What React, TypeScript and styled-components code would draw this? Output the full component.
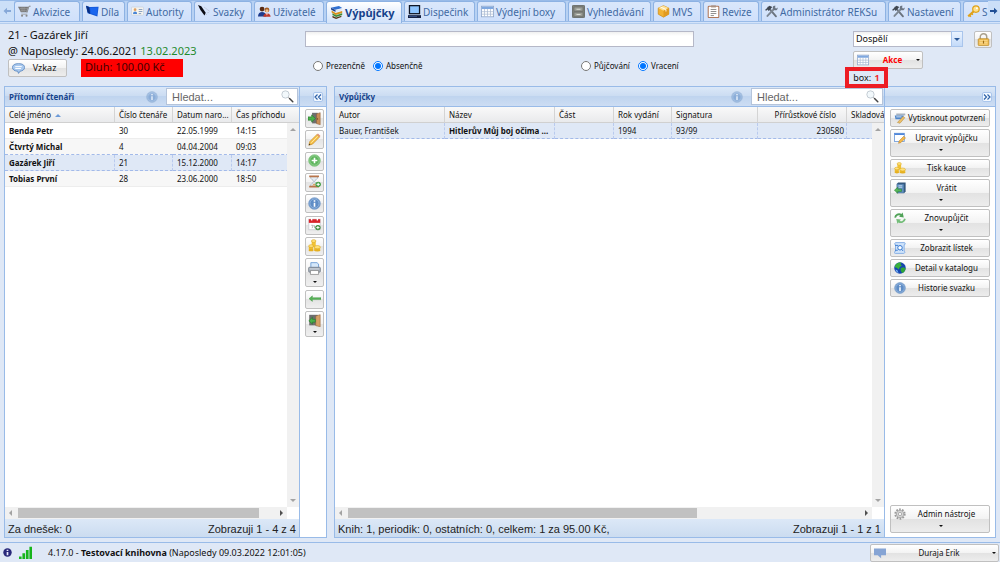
import React from "react";
import styled, { createGlobalStyle, css } from "styled-components";

const uiFont = `"Noto Sans", "Open Sans", sans-serif`;
const arial = `"Liberation Sans", Arial, sans-serif`;

const GlobalStyle = createGlobalStyle`
  *, *::before, *::after { box-sizing: border-box; }
  body { margin: 0; background: #dfe8f6; font-family: ${uiFont}; color: #111; }
  button, input, select { font-family: inherit; color: inherit; margin: 0; }
`;

/* ---------- icons ---------- */

const Svg = styled.svg<{ $size?: number }>`
  display: block;
  flex: none;
  width: ${(p) => p.$size ?? 12}px;
  height: ${(p) => p.$size ?? 12}px;
`;

const drawings: Record<string, React.ReactNode> = {
  cart: (
    <>
      <path d="M15.500 1.500h-2l-2.500 8" fill="none" stroke="#888" strokeWidth="1.200" />
      <path d="M0 2h12.500l-2 7H3.500z" fill="#777" />
      <path d="M2 4.300h9M3 6.600h8M5 2.500v6.500M7.500 2.500v6.500" stroke="#a5a5a5" strokeWidth=".6" />
      <path d="M4 11.300h7.500" stroke="#999" strokeWidth="1.100" />
      <circle cx="5" cy="13.300" r="1.300" fill="#888" />
      <circle cx="10.500" cy="13.300" r="1.300" fill="#888" />
    </>
  ),
  book: (
    <>
      <path d="M0 1l4.500 1.500 11-.5-1.500 12-9-3-3-1z" fill="#1257d6" />
      <path d="M0 1l4 1.500L5 11 2 9z" fill="#0a2f80" />
      <path d="M5 3.500l9.500-.5-1.300 9.500-7.200-2.300z" fill="#1a66ee" />
    </>
  ),
  card: (
    <>
      <rect x=".5" y="2.500" width="15" height="10" rx="1" fill="#f6f4ee" stroke="#c9d3e2" />
      <circle cx="5" cy="5.700" r="1.700" fill="#e0a060" />
      <path d="M2.500 11c0-4 5-4 5 0z" fill="#4a86d6" />
      <path d="M9.500 5.500h4.500M9.500 8h4.500M9.500 10.500h3" stroke="#8aa0c0" strokeWidth="1.200" />
    </>
  ),
  pen: (
    <>
      <path d="M0 0l4 1.500 5.500 8L8 13 3 6z" fill="#0c0c14" />
      <path d="M8 3l6 4.500-4 4.500" fill="none" stroke="#aab" strokeWidth="1" strokeDasharray="1.500 1.500" />
    </>
  ),
  users: (
    <>
      <circle cx="5" cy="5" r="3" fill="#5a2d16" />
      <path d="M0 14c0-7 10-7 10 0z" fill="#1e3b8c" />
      <circle cx="11" cy="6" r="3" fill="#a55c22" />
      <circle cx="11" cy="7" r="1.900" fill="#f0c090" />
      <path d="M6.500 14.500c0-6 9-6 9 0z" fill="#c0392b" />
      <path d="M10 10l1 3 1-3z" fill="#fff" />
    </>
  ),
  books: (
    <>
      <path d="M1 2l10-2 4 2.500-8 2z" fill="#2f6fd0" />
      <path d="M1 2l6 3v2.500L1.500 4.500z" fill="#1b3f8a" />
      <path d="M7 5l8-2v2.300L7 7.500z" fill="#dfe8f6" />
      <path d="M2 5.500l5 3 8-2.500v2.500l-8 2.500-5-3z" fill="#d99018" />
      <path d="M3 9l4.500 2.500L15 9v2l-7.500 2.500L3 11z" fill="#3d8b37" />
      <path d="M3 12l4.500 2L14 12v1.500L7.500 16 3 14z" fill="#5a3a18" />
    </>
  ),
  monitor: (
    <>
      <rect x="1" y="0" width="14" height="11.500" fill="#101828" />
      <rect x="2.600" y="1.600" width="10.800" height="8.300" fill="#8ec5ff" />
      <rect x="0" y="12.500" width="16" height="3.500" fill="#152040" />
      <path d="M1 14h10" stroke="#3d5fa0" />
    </>
  ),
  grid: (
    <>
      <rect x=".5" y="1.500" width="15" height="13" fill="#fff" stroke="#8fa5c8" />
      <path d="M1 2h14v3H1z" fill="#7fa8e0" />
      <path d="M4.300 5v9M8 5v9M11.700 5v9M1 8.200h14M1 11.300h14" stroke="#a9b9d2" strokeWidth=".9" />
    </>
  ),
  cabinet: (
    <>
      <rect x=".5" y=".5" width="15" height="15" rx="1" fill="#7d8078" stroke="#5d605a" />
      <path d="M2.500 2.500h11v5h-11zM2.500 9h11v5h-11z" fill="#9a9d95" stroke="#666" strokeWidth=".7" />
      <path d="M5.500 4.500h5v1.300h-5zM5.500 11h5v1.300h-5z" fill="#d8dad4" />
    </>
  ),
  box: (
    <>
      <path d="M8 .8l6.500 3v7.500L8 15l-6.500-3.700V3.800z" fill="#f2b233" stroke="#c98512" strokeWidth=".8" />
      <path d="M8 .8l6.500 3L8 7 1.500 3.800z" fill="#ffe193" />
      <path d="M8 7l6.500-3.200v7.500L8 15z" fill="#e19a20" />
      <path d="M4.500 2.500l6.500 3v2.500" fill="none" stroke="#fff" strokeWidth="1.100" />
    </>
  ),
  list: (
    <>
      <rect x="1.500" y="1.500" width="13" height="14" rx="1" fill="#fff" stroke="#b0785a" strokeWidth="1.300" />
      <path d="M5 .5h6v2.500H5z" fill="#a89080" />
      <path d="M4.500 5.500h7M4.500 8h7M4.500 10.500h7M4.500 13h4" stroke="#666" strokeWidth=".9" />
    </>
  ),
  tools: (
    <>
      <path d="M4 3l9.500 11" stroke="#6b737e" strokeWidth="2.300" strokeLinecap="round" />
      <path d="M0 6l5.500-5L9 2.500 4.500 7.500 3 5.500 1.500 7z" fill="#3f4650" />
      <path d="M12 4L3 13.500" stroke="#7d8794" strokeWidth="2.300" strokeLinecap="round" />
      <path d="M10 1.500c2-1 3-.5 3-.5l-1 2.500 1.500 1L15.500 3c.5 2-1 4-3.500 3.500S9 3.500 10 1.500z" fill="#6a7482" />
    </>
  ),
  key: (
    <>
      <path d="M9 7l-7.500 7" stroke="#dfa21c" strokeWidth="2.600" />
      <path d="M3 12.500l1.800 2M5.500 10.200l1.800 2" stroke="#dfa21c" strokeWidth="1.600" />
      <circle cx="11" cy="5" r="4" fill="#ffe08a" stroke="#dfa21c" strokeWidth="1.500" />
      <circle cx="12.200" cy="4" r="1.100" fill="#fff" />
    </>
  ),
  bubble: (
    <>
      <path d="M8 2c4.500 0 7.500 1.700 7.500 4.700S12.500 11 10 11.300L8 14l-1-2.700C3.500 11.300.5 9.500.5 6.700S3.500 2 8 2z" fill="#a9c9ee" stroke="#5583bd" />
      <path d="M4 5.700h8M4 8h7" stroke="#fff" strokeWidth="1.200" />
    </>
  ),
  lock: (
    <>
      <path d="M4 8V5a4 4 0 018 0v3" fill="none" stroke="#a9a08c" strokeWidth="1.800" />
      <rect x="1.500" y="7" width="13" height="8.500" rx="1" fill="#f0ba4c" stroke="#b98a2a" strokeWidth=".9" />
      <path d="M3 9.500h10M3 11.500h10M3 13.500h10" stroke="#fbe0a0" />
      <path d="M8 9.500v3.500" stroke="#9a6b18" strokeWidth="1.400" />
    </>
  ),
  info: (
    <>
      <circle cx="8" cy="8" r="7.200" fill="#5f8dc6" stroke="#8aa9cf" />
      <circle cx="8" cy="8" r="5.600" fill="none" stroke="#a9c6e8" strokeWidth=".8" />
      <path d="M8 4v1.800M8 7v5" stroke="#fff" strokeWidth="2" />
    </>
  ),
  search: (
    <>
      <circle cx="5.500" cy="5.500" r="4.500" fill="#f2f8fb" stroke="#b9c2ca" />
      <path d="M9 9l1.500 1.500" stroke="#999" strokeWidth="1.200" />
      <path d="M10.500 10.500l4 4" stroke="#444" strokeWidth="1.900" strokeLinecap="round" />
    </>
  ),
  doorIn: (
    <>
      <path d="M5 1h7v13H5z" fill="#6e6e6e" />
      <path d="M10.500 2.500L15 .8v15l-4.500-1.500z" fill="#c98e58" stroke="#8a5a30" strokeWidth=".6" />
      <circle cx="11.800" cy="8.500" r=".7" fill="#5a3818" />
      <path d="M0 6h4.500V3.500L9 8l-4.500 4.500V10H0z" fill="#49b04a" stroke="#2c7a2e" strokeWidth=".8" />
    </>
  ),
  doorOut: (
    <>
      <path d="M1.500 1H12v13H1.500z" fill="#6e6e6e" />
      <path d="M9.500 2.500L15 .8v15l-5.500-1.500z" fill="#d6a066" stroke="#8a5a30" strokeWidth=".6" />
      <path d="M9 6.500H5.500V4L1 8.300l4.500 4.200V10H9z" fill="#49b04a" stroke="#2c7a2e" strokeWidth=".8" />
    </>
  ),
  pencil: (
    <>
      <path d="M1 15l1.300-4.500L11 1.800l3.200 3.200-8.700 8.700z" fill="#f5c04a" stroke="#c78a20" strokeWidth=".8" />
      <path d="M11 1.800l1.200-1.200 3.200 3.200L14.200 5z" fill="#e08f70" />
      <path d="M4 12l8-8" stroke="#ffe6a0" strokeWidth="1.200" />
      <path d="M1 15l.6-2 1.400 1.400z" fill="#333" />
    </>
  ),
  plus: (
    <>
      <circle cx="8" cy="8" r="7.200" fill="#5db55c" stroke="#8fc98e" />
      <circle cx="8" cy="8" r="5.800" fill="none" stroke="#a8dca6" strokeWidth=".8" />
      <path d="M8 4.500v7M4.500 8h7" stroke="#fff" strokeWidth="2" />
    </>
  ),
  hourglass: (
    <>
      <path d="M3 2c0 4 4 4 4 6s-4 2-4 6h9c0-4-4-4-4-6s4-2 4-6z" fill="#e4ecf3" stroke="#9aa8b5" strokeWidth=".8" />
      <path d="M1.500.5h12v2.300h-12zM1.500 13.200h12v2.300h-12z" fill="#b8754a" />
      <path d="M5 13l2.500-3 2.500 3z" fill="#d9a060" />
      <circle cx="12.500" cy="11.500" r="3.300" fill="#3c9c3c" />
      <path d="M12.500 9.500v4M10.500 11.500h4" stroke="#fff" strokeWidth="1.200" />
    </>
  ),
  calendar: (
    <>
      <rect x="1" y="1.500" width="14" height="13" fill="#fff" stroke="#c9c9d0" />
      <path d="M1 1.500h14V6H1z" fill="#d8232a" />
      <path d="M4.500 0v3M11.500 0v3" stroke="#fff" strokeWidth="1.600" />
      <path d="M4 9h2.500l-1.500 3.500M8 9v3.500" fill="none" stroke="#999" strokeWidth=".9" />
      <circle cx="12.200" cy="11.800" r="3.300" fill="#3c8c3c" />
      <path d="M12.200 9.800v4M10.200 11.800h4" stroke="#fff" strokeWidth="1.200" />
    </>
  ),
  coins: (
    <>
      <path d="M4.500 2.500h5V10h-5z" fill="#f1c232" />
      <ellipse cx="7" cy="2.500" rx="2.800" ry="1.700" fill="#ffe27a" stroke="#d8a520" strokeWidth=".7" />
      <path d="M1 8.500h5.500V14H1zM7.500 10h7.500v4.500H7.500z" fill="#efbd2c" />
      <ellipse cx="3.800" cy="8.700" rx="3" ry="1.700" fill="#ffe27a" stroke="#d8a520" strokeWidth=".7" />
      <ellipse cx="11.500" cy="10" rx="3.700" ry="2" fill="#ffe27a" stroke="#d8a520" strokeWidth=".7" />
      <ellipse cx="11.500" cy="14" rx="3.700" ry="1.400" fill="#e5af20" />
      <ellipse cx="3.800" cy="13.700" rx="3" ry="1.500" fill="#e5af20" />
    </>
  ),
  printer: (
    <>
      <path d="M3.500.8h7.500l2 1.700V7h-9.500z" fill="#d5e8fb" stroke="#5f93d0" strokeWidth="1" />
      <rect x=".8" y="6.500" width="14.400" height="6" rx="1" fill="#a9b2bd" stroke="#6b7480" strokeWidth=".9" />
      <path d="M3 10.500h10v4.800H3z" fill="#fff" stroke="#777" strokeWidth=".8" />
      <path d="M2 8.500h12" stroke="#d9dee5" />
    </>
  ),
  arrowLeft: <path d="M0 7.500l4.500-3.700v2.400H16v2.600H4.500v2.400z" fill="#57b357" stroke="#2f8a34" strokeWidth=".5" />,
  receipt: (
    <>
      <path d="M3 2h12v2.500H3z" fill="#a9b3be" />
      <path d="M1 4.500h12l-2 5H2z" fill="#4f86c9" />
      <path d="M4.500 14l7.500-8 2.500 1.500L8 15z" fill="#eec068" stroke="#a67c30" strokeWidth=".6" />
      <path d="M3 6.500h7" stroke="#fff" />
    </>
  ),
  edit: (
    <>
      <rect x=".7" y="1.700" width="13" height="11" fill="#fff" stroke="#5b8fd6" />
      <path d="M.7 1.700h13v2.300H.7z" fill="#4f86d9" />
      <path d="M6 15l1-3.300 6-6 2.300 2.300-6 6z" fill="#f5b94a" stroke="#b87a20" strokeWidth=".7" />
    </>
  ),
  returnBook: (
    <>
      <path d="M3.500 2.500L5.500.8h10v12l-2 2.200h-10z" fill="#35597f" />
      <rect x="4" y="3" width="9" height="11.500" fill="#5f8fc0" />
      <path d="M6 5h5M6 7h5" stroke="#dce9f5" />
      <path d="M10 9.500H5V7L.5 11 5 15v-2.500h5z" fill="#57b95a" stroke="#2a7a2d" strokeWidth=".7" />
    </>
  ),
  renew: (
    <>
      <path d="M1.500 7.500C2 4 6 1.500 10 4" fill="none" stroke="#4fa257" strokeWidth="2.400" />
      <path d="M11.500.8l1.500 6.400-6.200-.8z" fill="#4fa257" />
      <path d="M14.500 9c-.5 3.500-4.500 6-8.500 3.500" fill="none" stroke="#74bd79" strokeWidth="2.400" />
      <path d="M4.500 15.600L3 9.300l6.200.8z" fill="#74bd79" />
    </>
  ),
  slip: (
    <>
      <path d="M2.500.8h11c2 0 2 3 0 3v8.500c1.500.2 1.500 2.900-.8 2.900h-11c-2 0-1.500-2.900.3-2.900V3.800c-1.500 0-1.500-3 .5-3z" fill="#cfe3fa" stroke="#6d9fe0" />
      <path d="M1.500 4.500h4M1.500 11h3.500" stroke="#2f74cf" strokeWidth="1.200" />
      <circle cx="8" cy="7.700" r="3" fill="#fff" stroke="#2f74cf" strokeWidth="1.300" />
      <path d="M10.300 10l1.700 1.700" stroke="#2f74cf" strokeWidth="1.300" />
    </>
  ),
  globe: (
    <>
      <circle cx="8" cy="8" r="7.700" fill="#1546b0" />
      <path d="M3 2.500c3-2 6-2 7-1.500l-1.500 2 2 1.500-3 2.500-1 3-3-2.500-2.500-.5c0-2 1-3.500 2-4.500z" fill="#39b03c" />
      <path d="M9 8l4-1 2.300 1.500c0 3-2 5-4.300 6.300L9 12z" fill="#2ea636" />
      <path d="M2 10l2.500 1L6 14.500C4 14 2.500 12.500 2 10z" fill="#7db8f5" />
    </>
  ),
  gear: (
    <>
      <circle cx="8" cy="8" r="6.300" fill="none" stroke="#999" strokeWidth="2.400" strokeDasharray="2.300 1.660" />
      <circle cx="8" cy="8" r="5" fill="#d8d8d8" stroke="#999" />
      <circle cx="8" cy="8" r="2.300" fill="#f4f4f4" stroke="#999" />
    </>
  ),
  chat: <path d="M0 2h16v9H9.500v4L5 11H0z" fill="#86a4d4" />,
  signal: (
    <path d="M0 13h3.200v3H0zM4.200 9h3.300v7H4.200zM8.500 5h3.300v11H8.500zM12.800 1H16v15h-3.200z" fill="#18b51c" />
  ),
  globeInfo: (
    <>
      <circle cx="8" cy="8" r="7.500" fill="#29297a" />
      <path d="M8 3v2.500M8 7v6" stroke="#e8e8ff" strokeWidth="3" />
    </>
  ),
};

const Icon = ({ name, size }: { name: string; size?: number }) => (
  <Svg viewBox="0 0 16 16" $size={size} aria-hidden="true">
    {drawings[name]}
  </Svg>
);

const Caret = styled.span<{ $dir?: "up" | "down" | "left" | "right"; $color?: string; $size?: number }>`
  flex: none;
  width: 0;
  height: 0;
  border: ${(p) => p.$size ?? 3}px solid transparent;
  ${({ $dir = "down", $color = "#111" }) => {
    const map = {
      down: css`border-top-color: ${$color}; border-bottom-width: 0;`,
      up: css`border-bottom-color: ${$color}; border-top-width: 0;`,
      left: css`border-right-color: ${$color}; border-left-width: 0;`,
      right: css`border-left-color: ${$color}; border-right-width: 0;`,
    };
    return map[$dir];
  }}
`;

/* ---------- page ---------- */

const Page = styled.div`
  display: flex;
  flex-direction: column;
  min-height: 100vh;
  overflow: hidden;
`;

/* ---------- tabs ---------- */

const TabBar = styled.nav`
  display: flex;
  height: 24px;
  border-top: 1px solid #99bbe8;
  border-bottom: 1px solid #b3cdee;
  background: linear-gradient(#b7d1f3 0 20px, #99bbe8 20px 21px, #d3e3fa 21px);
`;

const TabList = styled.div`
  display: flex;
  flex: 1;
  min-width: 0;
  gap: 2px;
  overflow: hidden;
`;

const TabArrow = styled.button<{ $width: number }>`
  display: flex;
  flex: none;
  align-items: center;
  justify-content: center;
  width: ${(p) => p.$width}px;
  height: 20px;
  padding: 0;
  border: 0;
  background: #cbdff8;
`;

const Tab = styled.button<{ $width: number; $active?: boolean }>`
  display: flex;
  flex: none;
  align-items: center;
  gap: 2px;
  width: ${(p) => p.$width}px;
  height: ${(p) => (p.$active ? 22 : 20)}px;
  padding: 0 0 0 3px;
  border: 1px solid #8db2e3;
  border-bottom: 0;
  border-radius: 3px 3px 0 0;
  background: ${(p) => (p.$active ? "linear-gradient(#fff, #e2edfc 60%, #d3e3fa)" : "linear-gradient(#dae7fb, #cfe0fb)")};
  color: ${(p) => (p.$active ? "#15428b" : "#416aa3")};
  font-size: ${(p) => (p.$active ? 11 : 10)}px;
  line-height: 16px;
  font-weight: ${(p) => (p.$active ? 700 : 400)};
  white-space: nowrap;
`;

const tabs: { label: string; icon: string; width: number; active?: boolean }[] = [
  { label: "Akvizice", icon: "cart", width: 66 },
  { label: "Díla", icon: "book", width: 43 },
  { label: "Autority", icon: "card", width: 65 },
  { label: "Svazky", icon: "pen", width: 58 },
  { label: "Uživatelé", icon: "users", width: 70 },
  { label: "Výpůjčky", icon: "books", width: 76, active: true },
  { label: "Dispečink", icon: "monitor", width: 71 },
  { label: "Výdejní boxy", icon: "grid", width: 89 },
  { label: "Vyhledávání", icon: "cabinet", width: 83 },
  { label: "MVS", icon: "box", width: 48 },
  { label: "Revize", icon: "list", width: 56 },
  { label: "Administrátor REKSu", icon: "tools", width: 125 },
  { label: "Nastavení", icon: "tools", width: 73 },
  { label: "S", icon: "key", width: 65 },
];

/* ---------- top form ---------- */

const TopForm = styled.form`
  display: grid;
  grid-template-columns: 297px minmax(0, 1fr) 159px 139px;
  height: 62px;
  padding: 3px 8px 0;
`;

const Reader = styled.div`
  font-size: 11px;
  line-height: 16px;
`;

const ReaderActions = styled.div`
  display: flex;
  gap: 14px;
  align-items: flex-start;
`;

const LastVisit = styled.span`
  color: #1e8a2c;
`;

const Debt = styled.span`
  width: 102px;
  height: 18px;
  padding-left: 4px;
  background: #f00;
  color: #400;
  line-height: 16px;
`;

const Button = styled.button<{ $width?: number }>`
  display: flex;
  align-items: center;
  width: ${(p) => (p.$width ? `${p.$width}px` : "100%")};
  height: 18px;
  padding: 0 2px 0 3px;
  border: 1px solid #c0c0c0;
  border-radius: 2px;
  background: linear-gradient(#fff, #f3f3f3 48%, #e2e2e2 50%, #ededed);
  font-size: 8px;
  line-height: 12px;
  white-space: nowrap;
`;

const ButtonText = styled.span<{ $size?: number; $alert?: boolean }>`
  flex: 1;
  text-align: center;
  font-size: ${(p) => p.$size ?? 8}px;
  ${(p) => p.$alert && css`color: #f00; font-weight: 700;`}
`;

const Middle = styled.div`
  padding-top: 4px;
`;

const BarcodeInput = styled.input`
  display: block;
  width: 100%;
  height: 16px;
  border: 1px solid #b5b8c8;
  background: linear-gradient(#f0f0f0, #fff 4px);
`;

const Radios = styled.div`
  display: flex;
  height: 12px;
  margin-top: 13px;
  padding-left: 8px;
  white-space: nowrap;
`;

const RadioGroup = styled.div<{ $width?: number }>`
  display: flex;
  flex: none;
  gap: 8px;
  width: ${(p) => p.$width ?? 110}px;
`;

const RadioLabel = styled.label`
  display: flex;
  align-items: center;
  gap: 3px;
  font-size: 8px;
  line-height: 12px;
  input { width: 10px; height: 10px; }
`;

const Right = styled.div`
  position: relative;
  grid-column: 4;
  padding-top: 4px;
`;

const CategoryRow = styled.div`
  display: flex;
  justify-content: space-between;
  margin-bottom: 3px;
`;

const SelectWrap = styled.div`
  display: grid;
  grid-template-columns: 1fr 12px;
  width: 110px;
  height: 16px;
`;

const Select = styled.select`
  grid-area: 1 / 1 / 2 / 3;
  padding: 0 2px;
  border: 1px solid #b5b8c8;
  border-radius: 0;
  appearance: none;
  background: linear-gradient(#f0f0f0, #fff 4px);
  font-size: 9px;
  line-height: 12px;
`;

const SelectArrow = styled.span`
  grid-area: 1 / 2;
  display: flex;
  align-items: center;
  justify-content: center;
  border: 1px solid #a9c5ec;
  background: linear-gradient(#eaf3ff, #c3daf9);
  pointer-events: none;
`;

const LockButton = styled(Button)`
  height: 17px;
  justify-content: center;
  padding: 0;
`;

const BoxBadge = styled.div`
  position: absolute;
  top: 40px;
  left: -8px;
  z-index: 2;
  width: 43px;
  height: 21px;
  border: 4px solid #ed1c24;
  background: #dfe8f6;
  font-size: 9px;
  line-height: 13px;
  text-align: center;
  b { margin-left: 1px; color: #f0282d; }
`;

/* ---------- panels ---------- */

const Workspace = styled.main`
  display: flex;
  flex: 1;
  gap: 7px;
  padding: 0 4px 4px;
`;

const PanelPair = styled.section<{ $left?: boolean }>`
  display: flex;
  min-width: 0;
  ${(p) => (p.$left ? css`flex: none; width: 323px;` : css`flex: 1;`)}
`;

const Panel = styled.div`
  display: flex;
  flex: 1;
  flex-direction: column;
  min-width: 0;
  border: 1px solid #99bbe8;
  background: #fff;
`;

const PanelHead = styled.header`
  display: flex;
  align-items: center;
  flex: none;
  height: 20px;
  padding: 0 1px 0 4px;
  border-bottom: 1px solid #99bbe8;
  background: linear-gradient(#dbe8f8, #cbdcf2 48%, #bfd4ef 50%, #cdddf3);
`;

const PanelTitle = styled.h2`
  flex: 1;
  margin: 0;
  color: #15428b;
  font-size: 8px;
  line-height: 12px;
`;

const InfoMark = styled.span`
  margin-right: 8px;
  opacity: 0.55;
`;

const SearchField = styled.label`
  display: flex;
  align-items: center;
  width: 132px;
  height: 17px;
  padding: 0 3px 0 5px;
  border: 1px solid #b5c4da;
  background: #fff;
`;

const SearchInput = styled.input`
  flex: 1;
  min-width: 0;
  padding: 0;
  border: 0;
  background: none;
  font-family: ${arial};
  font-size: 11px;
  line-height: 14px;
  &::placeholder { color: #666; opacity: 1; }
`;

const Grid = styled.div`
  display: grid;
  flex: 1;
  grid-template-columns: minmax(0, 1fr) 12px;
  grid-template-rows: 16px 1fr 12px;
`;

const TableClip = styled.div`
  grid-area: 1 / 1 / 3 / 3;
  overflow: hidden;
`;

const Table = styled.table`
  width: 100%;
  table-layout: fixed;
  border-collapse: separate;
  border-spacing: 0;
  font-size: 8px;
  line-height: 12px;
`;

const Th = styled.th<{ $right?: boolean }>`
  height: 16px;
  padding: 0 ${(p) => (p.$right ? 10 : 4)}px 0 4px;
  border-right: 1px solid #d4d4d4;
  border-bottom: 1px solid #d0d0d0;
  background: linear-gradient(#f9f9f9, #e9eaec);
  font-weight: 400;
  text-align: ${(p) => (p.$right ? "right" : "left")};
  white-space: nowrap;
  &:last-child { border-right: 0; }
`;

const SortMark = styled(Caret)`
  display: inline-block;
  margin-left: 4px;
  vertical-align: middle;
`;

const Td = styled.td<{ $bold?: boolean; $right?: boolean }>`
  height: 16px;
  padding: 0 ${(p) => (p.$right ? 2 : 4)}px 0 4px;
  border-bottom: 1px solid #ededed;
  font-weight: ${(p) => (p.$bold ? 700 : 400)};
  text-align: ${(p) => (p.$right ? "right" : "left")};
  white-space: nowrap;
`;

const Tr = styled.tr<{ $selected?: boolean }>`
  &:nth-child(even) { background: #f7f7f7; }
  &:has(+ tr[aria-selected="true"]) td { border-bottom: 1px dashed #a3bae9; }
  ${(p) =>
    p.$selected &&
    css`
      background: #dfe8f6;
      td { border-bottom: 1px dashed #a3bae9; border-right: 1px dashed #b9caee; }
    `}
`;

const Track = styled.div<{ $vertical?: boolean }>`
  display: flex;
  align-items: center;
  justify-content: space-between;
  background: #f1f1f1;
  ${(p) =>
    p.$vertical
      ? css`grid-area: 2 / 2; flex-direction: column; padding: 5px 0;`
      : css`grid-area: 3 / 1; padding: 0 4px;`}
`;

const Thumb = styled.div<{ $share: number }>`
  width: ${(p) => p.$share}%;
  height: 10px;
  margin: 0 auto 0 6px;
  background: #c1c1c1;
`;

const PanelFoot = styled.footer`
  display: flex;
  flex: none;
  align-items: center;
  justify-content: space-between;
  height: 18px;
  padding: 2px 3px 0;
  background: linear-gradient(#dce8f7, #cbdcf0);
  color: #222;
  font-family: ${arial};
  font-size: 11px;
  line-height: 14px;
  white-space: nowrap;
`;

const Side = styled.aside<{ $width: number }>`
  display: flex;
  flex: none;
  flex-direction: column;
  width: ${(p) => p.$width}px;
  border: 1px solid #99bbe8;
  border-left: 0;
  background: #fff;
`;

const SideHead = styled(PanelHead)`
  justify-content: flex-end;
  padding-right: 3px;
`;

const CollapseButton = styled.button`
  display: flex;
  align-items: center;
  justify-content: center;
  width: 10px;
  height: 10px;
  padding: 0;
  border: 1px solid #a9c5ec;
  border-radius: 2px;
  background: #f2f8ff;
`;

const IconColumn = styled.div`
  display: flex;
  flex-direction: column;
  justify-content: space-between;
  height: 230px;
  padding: 2px 2px 0 5px;
`;

const ToolButton = styled.button<{ $height?: number }>`
  display: flex;
  flex-direction: column;
  align-items: center;
  justify-content: space-around;
  width: 19px;
  height: ${(p) => p.$height ?? 19}px;
  padding: 0 0 1px;
  border: 1px solid #c0c0c0;
  border-radius: 2px;
  background: linear-gradient(#fff, #f3f3f3 48%, #e4e4e4 50%, #efefef);
`;

const ActionColumn = styled.div`
  display: flex;
  flex: 1;
  flex-direction: column;
  gap: 2px;
  padding: 2px 5px 4px 5px;
`;

const SplitButton = styled(Button)`
  flex-direction: column;
  height: 28px;
  padding: 0 2px 5px 3px;
  justify-content: space-between;
`;

const SplitTop = styled.span`
  display: flex;
  align-items: center;
  width: 100%;
  height: 16px;
`;

const Spacer = styled.div`
  flex: 1;
`;

/* ---------- status bar ---------- */

const StatusBar = styled.footer`
  display: flex;
  align-items: center;
  flex: none;
  height: 20px;
  padding: 0 1px 0 3px;
  border-top: 1px solid #99bbe8;
  font-size: 9px;
  line-height: 12px;
  white-space: nowrap;
`;

const StatusText = styled.span`
  flex: 1;
  margin-left: 16px;
`;

const StatusIcon = styled.span`
  margin-right: 7px;
`;

/* ---------- data ---------- */

const readers = [
  ["Benda Petr", "30", "22.05.1999", "14:15"],
  ["Čtvrtý Michal", "4", "04.04.2004", "09:03"],
  ["Gazárek Jiří", "21", "15.12.2000", "14:17"],
  ["Tobias První", "28", "23.06.2000", "18:50"],
];

const toolIcons = ["doorIn", "pencil", "plus", "hourglass", "info", "calendar", "coins"];
const toolNames = ["Příchod", "Upravit", "Přidat", "Čekání", "Informace", "Kalendář", "Platby"];

const actions = [
  { label: "Vytisknout potvrzení", icon: "receipt" },
  { label: "Upravit výpůjčku", icon: "edit", split: true },
  { label: "Tisk kauce", icon: "coins" },
  { label: "Vrátit", icon: "returnBook", split: true },
  { label: "Znovupůjčit", icon: "renew", split: true },
  { label: "Zobrazit lístek", icon: "slip" },
  { label: "Detail v katalogu", icon: "globe" },
  { label: "Historie svazku", icon: "info" },
];

const Chevrons = ({ flip }: { flip?: boolean }) => (
  <Svg viewBox="0 0 8 8" $size={8} aria-hidden="true">
    <path
      d={flip ? "M1 1.500L3.500 4 1 6.500M4.500 1.500L7 4 4.500 6.500" : "M3.500 1.500L1 4l2.500 2.500M7 1.500L4.500 4 7 6.500"}
      fill="none"
      stroke="#2f62a8"
      strokeWidth="1.200"
    />
  </Svg>
);

const NavArrow = ({ right, color }: { right?: boolean; color: string }) => (
  <Svg viewBox="0 0 8 8" $size={8} aria-hidden="true">
    <path d={right ? "M0 3h4V.8L7.500 4 4 7.200V5H0z" : "M8 3H4V.8L.5 4 4 7.200V5h4z"} fill={color} />
  </Svg>
);

const Search = ({ label }: { label: string }) => (
  <SearchField aria-label={label}>
    <SearchInput type="text" placeholder="Hledat..." aria-label={label} />
    <Icon name="search" size={13} />
  </SearchField>
);

const Action = ({ label, icon, split }: { label: string; icon: string; split?: boolean }) =>
  split ? (
    <SplitButton type="button">
      <SplitTop>
        <Icon name={icon} />
        <ButtonText>{label}</ButtonText>
      </SplitTop>
      <Caret $size={2} />
    </SplitButton>
  ) : (
    <Button type="button">
      <Icon name={icon} />
      <ButtonText>{label}</ButtonText>
    </Button>
  );

const Scrollbars = ({ share }: { share: number }) => (
  <>
    <Track $vertical>
      <Caret $dir="up" $color="#a3a3a3" />
      <Caret $color="#a3a3a3" />
    </Track>
    <Track>
      <Caret $dir="left" $color="#a3a3a3" />
      <Thumb $share={share} />
      <Caret $dir="right" $color="#505050" />
    </Track>
  </>
);

export default function App() {
  return (
    <Page>
      <GlobalStyle />
      <TabBar>
        <TabArrow type="button" $width={14} aria-label="Předchozí záložky">
          <NavArrow color="#86a8d8" />
        </TabArrow>
        <TabList>
          {tabs.map((t) => (
            <Tab key={t.label} type="button" $width={t.width} $active={t.active}>
              <Icon name={t.icon} size={13} />
              {t.label}
            </Tab>
          ))}
        </TabList>
        <TabArrow type="button" $width={12} aria-label="Další záložky">
          <NavArrow right color="#1f4f96" />
        </TabArrow>
      </TabBar>

      <TopForm>
        <Reader>
          <div>21 - Gazárek Jiří</div>
          <div>
            @ Naposledy: 24.06.2021 <LastVisit>13.02.2023</LastVisit>
          </div>
          <ReaderActions>
            <Button type="button" $width={59}>
              <Icon name="bubble" size={13} />
              <ButtonText $size={9}>Vzkaz</ButtonText>
            </Button>
            <Debt>Dluh: 100.00 Kč</Debt>
          </ReaderActions>
        </Reader>
        <Middle>
          <BarcodeInput type="text" aria-label="Čárový kód" />
          <Radios>
            <RadioGroup $width={268}>
              <RadioLabel>
                <input type="radio" name="loanType" />
                Prezenčně
              </RadioLabel>
              <RadioLabel>
                <input type="radio" name="loanType" defaultChecked />
                Absenčně
              </RadioLabel>
            </RadioGroup>
            <RadioGroup>
              <RadioLabel>
                <input type="radio" name="mode" />
                Půjčování
              </RadioLabel>
              <RadioLabel>
                <input type="radio" name="mode" defaultChecked />
                Vracení
              </RadioLabel>
            </RadioGroup>
          </Radios>
        </Middle>
        <Right>
          <CategoryRow>
            <SelectWrap>
              <Select aria-label="Kategorie" defaultValue="Dospělí">
                <option>Dospělí</option>
              </Select>
              <SelectArrow>
                <Caret $color="#2c5a9a" />
              </SelectArrow>
            </SelectWrap>
            <LockButton type="button" $width={18} aria-label="Zamknout">
              <Icon name="lock" size={13} />
            </LockButton>
          </CategoryRow>
          <Button type="button" $width={70}>
            <Icon name="grid" />
            <ButtonText $alert>Akce</ButtonText>
            <Caret $size={2} />
          </Button>
          <BoxBadge>
            box: <b>1</b>
          </BoxBadge>
        </Right>
      </TopForm>

      <Workspace>
        <PanelPair $left>
          <Panel>
            <PanelHead>
              <PanelTitle>Přítomní čtenáři</PanelTitle>
              <InfoMark>
                <Icon name="info" />
              </InfoMark>
              <Search label="Hledat čtenáře" />
            </PanelHead>
            <Grid>
              <TableClip>
                <Table>
                  <colgroup>
                    <col width="110" />
                    <col width="58" />
                    <col width="59" />
                    <col />
                  </colgroup>
                  <thead>
                    <tr>
                      <Th>
                        Celé jméno
                        <SortMark $dir="up" $color="#6d9bd8" />
                      </Th>
                      <Th>Číslo čtenáře</Th>
                      <Th>Datum naro...</Th>
                      <Th>Čas příchodu</Th>
                    </tr>
                  </thead>
                  <tbody>
                    {readers.map((r, i) => (
                      <Tr key={r[1]} $selected={i === 2} aria-selected={i === 2}>
                        {r.map((c, j) => (
                          <Td key={c} $bold={j === 0}>
                            {c}
                          </Td>
                        ))}
                      </Tr>
                    ))}
                  </tbody>
                </Table>
              </TableClip>
              <Scrollbars share={88} />
            </Grid>
            <PanelFoot>
              <span>Za dnešek: 0</span>
              <span>Zobrazuji 1 - 4 z 4</span>
            </PanelFoot>
          </Panel>
          <Side $width={27}>
            <SideHead>
              <CollapseButton type="button" aria-label="Sbalit">
                <Chevrons />
              </CollapseButton>
            </SideHead>
            <IconColumn>
              {toolIcons.map((n, i) => (
                <ToolButton key={n} type="button" aria-label={toolNames[i]}>
                  <Icon name={n} size={13} />
                </ToolButton>
              ))}
              <ToolButton type="button" $height={29} aria-label="Tisk">
                <Icon name="printer" size={13} />
                <Caret $size={2} />
              </ToolButton>
              <ToolButton type="button" aria-label="Zpět">
                <Icon name="arrowLeft" size={12} />
              </ToolButton>
              <ToolButton type="button" $height={26} aria-label="Odchod">
                <Icon name="doorOut" size={13} />
                <Caret $size={2} />
              </ToolButton>
            </IconColumn>
          </Side>
        </PanelPair>

        <PanelPair>
          <Panel>
            <PanelHead>
              <PanelTitle>Výpůjčky</PanelTitle>
              <InfoMark>
                <Icon name="info" />
              </InfoMark>
              <Search label="Hledat výpůjčky" />
            </PanelHead>
            <Grid>
              <TableClip>
                <Table>
                  <colgroup>
                    <col width="110" />
                    <col width="110" />
                    <col width="59" />
                    <col width="58" />
                    <col />
                    <col width="89" />
                    <col width="37" />
                  </colgroup>
                  <thead>
                    <tr>
                      <Th>Autor</Th>
                      <Th>Název</Th>
                      <Th>Část</Th>
                      <Th>Rok vydání</Th>
                      <Th>Signatura</Th>
                      <Th $right>Přírůstkové číslo</Th>
                      <Th>Skladová</Th>
                    </tr>
                  </thead>
                  <tbody>
                    <Tr $selected>
                      <Td>Bauer, František</Td>
                      <Td $bold>Hitlerův Můj boj očima ...</Td>
                      <Td />
                      <Td>1994</Td>
                      <Td>93/99</Td>
                      <Td $right>230580</Td>
                      <Td />
                    </Tr>
                  </tbody>
                </Table>
              </TableClip>
              <Scrollbars share={66} />
            </Grid>
            <PanelFoot>
              <span>Knih: 1, periodik: 0, ostatních: 0, celkem: 1 za 95.00 Kč,</span>
              <span>Zobrazuji 1 - 1 z 1</span>
            </PanelFoot>
          </Panel>
          <Side $width={111}>
            <SideHead>
              <CollapseButton type="button" aria-label="Sbalit">
                <Chevrons flip />
              </CollapseButton>
            </SideHead>
            <ActionColumn>
              {actions.map((a) => (
                <Action key={a.label} {...a} />
              ))}
              <Spacer />
              <Action label="Admin nástroje" icon="gear" split />
            </ActionColumn>
          </Side>
        </PanelPair>
      </Workspace>

      <StatusBar>
        <StatusIcon>
          <Icon name="globeInfo" size={9} />
        </StatusIcon>
        <Icon name="signal" size={13} />
        <StatusText>
          4.17.0 - <b>Testovací knihovna</b> (Naposledy 09.03.2022 12:01:05)
        </StatusText>
        <Button type="button" $width={129}>
          <Icon name="chat" />
          <ButtonText>Duraja Erik</ButtonText>
          <Caret $size={2} />
        </Button>
      </StatusBar>
    </Page>
  );
}
